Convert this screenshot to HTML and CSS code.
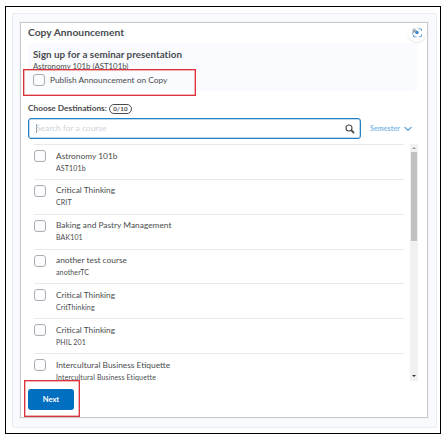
FILE: index.html
```html
<!DOCTYPE html>
<html lang="en">
<head>
<meta charset="utf-8">
<title>Copy Announcement</title>
<link rel="stylesheet" href="styles.css">
</head>
<body>
<div class="frame">
<div class="panel">
<main class="dialog">
  <header class="head"><h1><span>Copy Announcement</span></h1></header>
  <div class="capture">
    <svg width="12" height="12" viewBox="0 0 12 12" fill="none"><path d="M7.500 1.800H9.600A.8.8 0 0 1 10.400 2.600V4M10.400 7.200V8.900A.8.8 0 0 1 9.600 9.700H8M5.500 9.700H3.200A.8.8 0 0 1 2.400 8.900V7.500" stroke="#6ea6dc" stroke-width="1.100"/><path d="M1 2.500L5 5.500M1 7L4 3M1.500 4.800H5M2.500 1.500L5.500 3.500" stroke="#8b98a5" stroke-width="1"/><circle cx="6" cy="5.500" r="1.700" fill="#3d87cf"/></svg>
  </div>
  <section class="summary">
    <h2><span>Sign up for a seminar presentation</span></h2>
    <p class="course"><span>Astronomy 101b (AST101b)</span></p>
    <label class="publish"><i class="box"></i><span>Publish Announcement on Copy</span></label>
  </section>
  <div class="choose"><span class="choose-label">Choose Destinations:</span><span class="pill">0/10</span></div>
  <div class="search-row">
    <div class="search"><i class="caret"></i><span class="placeholder">Search for a course</span>
      <svg class="lens" width="10" height="10" viewBox="0 0 10 10" fill="none" stroke="#494c4e"><circle cx="4" cy="4" r="3" stroke-width="1.100"/><path d="M6.200 6.200L9 9" stroke-width="1.900"/></svg>
    </div>
    <div class="semester"><span>Semester</span><svg width="8" height="6" viewBox="0 0 8 6" fill="none"><path d="M1 1.500L4 4.200L7 1.500" stroke="#69ade0" stroke-width="1.500" stroke-linecap="round" stroke-linejoin="round"/></svg></div>
  </div>
  <div class="list">
    <ul>
      <li><i class="box"></i><div><b>Astronomy 101b</b><small>AST101b</small></div></li>
      <li><i class="box"></i><div><b>Critical Thinking</b><small>CRIT</small></div></li>
      <li><i class="box"></i><div><b>Baking and Pastry Management</b><small>BAK101</small></div></li>
      <li><i class="box"></i><div><b>another test course</b><small>anotherTC</small></div></li>
      <li><i class="box"></i><div><b>Critical Thinking</b><small>CritThinking</small></div></li>
      <li><i class="box"></i><div><b>Critical Thinking</b><small>PHIL 201</small></div></li>
      <li><i class="box"></i><div><b>Intercultural Business Etiquette</b><small>Intercultural Business Etiquette</small></div></li>
    </ul>
    <div class="scrollbar"><i class="arrow up"></i><i class="thumb"></i><i class="arrow down"></i></div>
  </div>
  <footer><button>Next</button></footer>
  <i class="mark mark-publish"></i>
  <i class="mark mark-next"></i>
</main>
</div>
</div>
</body>
</html>
```
FILE: styles.css
```css
* { box-sizing: border-box; }
body { margin: 0; padding: 6px 5px; background: #fff; font-family: Lato, sans-serif; color: #494c4e; }
h1, h2, p, ul { margin: 0; padding: 0; }
.frame { width: 436px; height: 428px; border: 1px solid #000; padding: 6px; }
.panel { width: 425px; height: 415px; padding: 8px 7px; background: #f9fafd; border: 1px solid #e8eef3; border-radius: 2px; }
.dialog { position: relative; width: 408px; height: 396px; padding: 0 9px 0 7px; background: #fff; border: 1px solid #c9caca; box-shadow: 0 0 1px #ccc; display: flex; flex-direction: column; }
.head { height: 20px; flex: none; }
h1 { font-size: 10.3px; line-height: 19px; font-weight: 700; letter-spacing: 0; }
.capture { position: absolute; right: 1px; top: 1px; width: 18px; height: 18px; border-radius: 50%; background: #fff; box-shadow: 0 1px 2px #e4e4e4; display: flex; align-items: center; justify-content: center; }
.summary { height: 48px; flex: none; padding: 5px 5px 0; background: #f9fbff; border-radius: 5px; }
h2 { font-size: 9.8px; line-height: 12px; font-weight: 700; letter-spacing: .02px; }
.course { height: 9px; overflow: hidden; font-size: 7.8px; line-height: 12px; }
.publish { display: flex; align-items: center; gap: 5px; height: 22px; font-size: 8.35px; }
.box { flex: none; width: 12px; height: 12px; border: 1px solid #a9adb3; border-radius: 3px; background: #fcfcff; }
.choose { display: flex; align-items: center; height: 13px; margin-top: 11px; gap: 2px; flex: none; }
.choose-label { width: 79px; white-space: nowrap; font-size: 8.3px; font-weight: 700; margin-top: -1px; }
.pill { width: 23px; height: 10px; border: 1px solid #494c4e; border-radius: 5px; font-size: 6.3px; line-height: 8px; font-weight: 700; text-align: center; letter-spacing: .15px; }
.search-row { display: flex; align-items: center; height: 21px; margin-top: 3px; flex: none; }
.search { width: 333px; height: 21px; border: 1px solid #267fc1; box-shadow: inset 0 0 0 .5px #7fb5dc; border-radius: 3px; display: flex; align-items: center; padding: 0 5px 0 7px; }
.caret { width: 1px; height: 9px; margin-right: -1px; background: #999; }
.placeholder { font-size: 8.4px; letter-spacing: .02px; color: #ced3d8; margin-top: -1px; }
.lens { margin-left: auto; }
.semester { margin-left: 9px; display: flex; align-items: center; gap: 4px; font-size: 7px; letter-spacing: .1px; font-weight: 700; color: #80b9e3; }
.semester span { margin-top: -1px; }
.list { height: 237px; margin-top: 5px; overflow: hidden; display: flex; justify-content: space-between; flex: none; }
ul { list-style: none; width: 370px; margin-left: 6px; }
li { height: 34.85px; border-top: 1px solid #e7eaed; display: flex; gap: 10px; padding-top: 5px; }
li > div { padding-top: .6px; }
b { display: block; font-weight: 400; font-size: 8.35px; line-height: 11px; }
small { display: block; font-size: 7px; letter-spacing: .13px; line-height: 13px; }
.scrollbar { width: 8px; height: 237px; background: #f1f1f1; display: flex; flex-direction: column; align-items: center; }
.thumb { width: 6px; height: 89px; margin-top: 3px; background: #c1c1c1; }
.arrow { border: 2px solid transparent; width: 0; height: 0; }
.up { border-bottom-color: #999; margin-top: 1px; }
.down { border-top-color: #333; margin-top: auto; margin-bottom: 2px; }
footer { padding-top: 8px; }
button { display: block; width: 46px; height: 21px; border: 0; border-radius: 3px; background: #006fbf; color: #fff; font: 700 7.5px Lato, sans-serif; padding: 0 0 1px; }
.mark { position: absolute; border: 1px solid #dc323c; box-shadow: inset 0 0 0 .5px #e36a70; }
.mark-publish { left: 2px; top: 46px; width: 173px; height: 27px; }
.mark-next { left: 3px; top: 357px; width: 56px; height: 37px; }
```
